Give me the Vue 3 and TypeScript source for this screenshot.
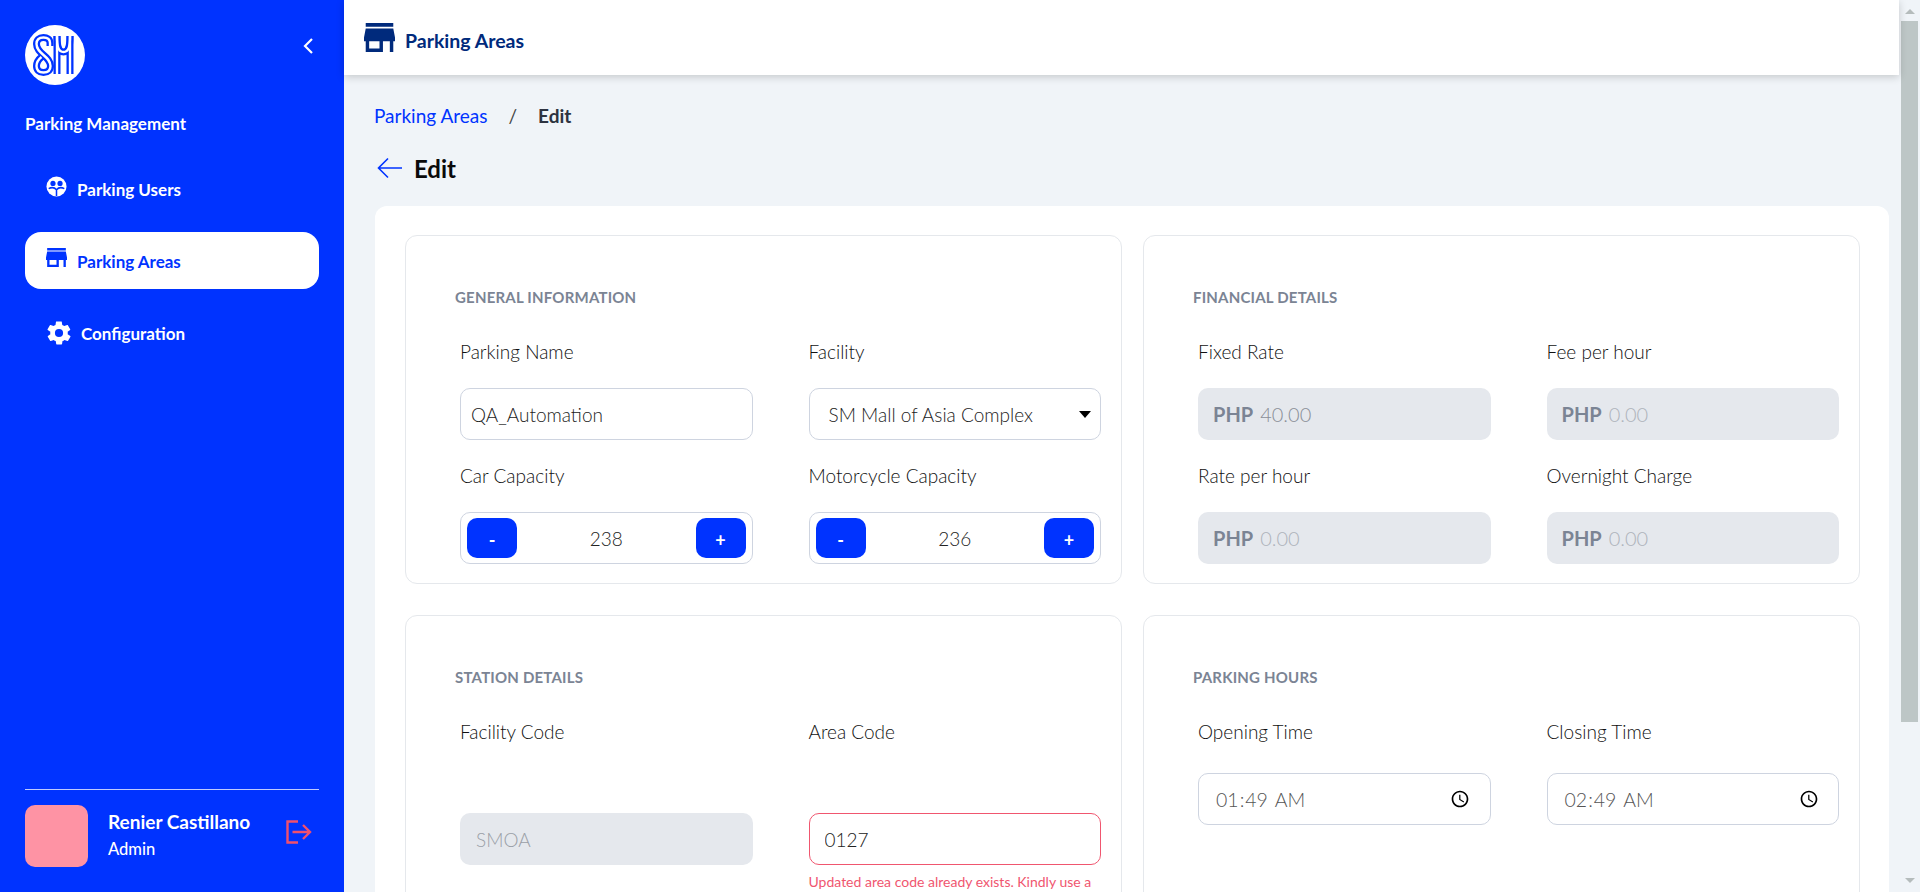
<script setup lang="ts">
interface NavItem {
  label: string
  icon: 'users' | 'store' | 'gear'
  active?: boolean
}

const navItems: NavItem[] = [
  { label: 'Parking Users', icon: 'users' },
  { label: 'Parking Areas', icon: 'store', active: true },
  { label: 'Configuration', icon: 'gear' }
]

const financialFields = [
  { label: 'Fixed Rate', value: '40.00', filled: true },
  { label: 'Fee per hour', value: '0.00' },
  { label: 'Rate per hour', value: '0.00' },
  { label: 'Overnight Charge', value: '0.00' }
]

/** Material "store" icon */
const storePath =
  'M20 4H4v2h16V4zm1 10v-2l-1-5H4l-1 5v2h1v6h10v-6h4v6h2v-6h1zm-9 4H6v-4h6v4z'

/** 标志的线条，先画蓝色粗线，再画白色细线形成双线效果 */
const logoStrokes = [
  'M25 21V18C25 14 22 12.500 18.500 12.500C14 12.500 11.500 15 11.500 19C11.500 24 15 27 18.500 30C22 33 25.500 36 25.500 41C25.500 45 23 47.500 18.500 47.500C14 47.500 11.500 45 11.500 41C11.500 37 14 34 16.500 32',
  'M32 11V49',
  'M45 11V49',
  'M32 11C32 22 33.500 27 38.500 27C43.500 27 45 22 45 11'
]
</script>

<template>
  <div class="layout">
    <aside class="sidebar">
      <div class="brand">
        <svg class="logo" viewBox="0 0 60 60">
          <circle cx="30" cy="30" r="30" fill="#fff" />
          <g fill="none">
            <path v-for="d in logoStrokes" :key="d" :d="d" stroke="#0033ff" stroke-width="7" />
            <path v-for="d in logoStrokes" :key="d + 'w'" :d="d" stroke="#fff" stroke-width="2.400" />
          </g>
        </svg>
        <svg class="collapse" viewBox="0 0 12 18">
          <path d="M10 2 3 9l7 7" fill="none" stroke="#fff" stroke-width="2.200" />
        </svg>
      </div>

      <div class="module-title">Parking Management</div>

      <nav class="nav">
        <a v-for="item in navItems" :key="item.label" class="nav-item" :class="{ active: item.active }">
          <svg v-if="item.icon === 'users'" class="nav-icon icon-users" viewBox="0 0 22 22">
            <circle cx="11" cy="11" r="10.500" fill="currentColor" />
            <circle cx="7.300" cy="7.800" r="2.700" fill="#0033ff" />
            <circle cx="14.700" cy="7.800" r="2.700" fill="#0033ff" />
            <path d="M2.800 13.300c2.800-1.500 6.200-1.200 8.200 1.200 2-2.400 5.400-2.700 8.200-1.200M11 14.500V21" fill="none" stroke="#0033ff" stroke-width="1.600" />
          </svg>
          <svg v-else-if="item.icon === 'store'" class="nav-icon icon-store" viewBox="3 4 18 16" preserveAspectRatio="none">
            <path fill="currentColor" :d="storePath" />
          </svg>
          <svg v-else class="nav-icon icon-gear" viewBox="0 0 24 24">
            <path fill="currentColor" d="M19.400 13c.1-.3.100-.7.100-1s0-.7-.1-1l2.100-1.600c.2-.2.200-.4.100-.6l-2-3.500c-.1-.2-.4-.3-.6-.2l-2.500 1c-.5-.4-1.100-.7-1.700-1l-.4-2.600c0-.3-.2-.4-.5-.4h-4c-.3 0-.5.100-.5.400l-.4 2.600c-.6.300-1.200.6-1.700 1l-2.500-1c-.2-.1-.5 0-.6.200l-2 3.500c-.1.200-.1.400.1.600L4.600 11c-.1.300-.1.700-.1 1s0 .7.100 1l-2.100 1.600c-.2.200-.2.400-.1.600l2 3.500c.1.200.4.300.6.200l2.500-1c.5.400 1.100.7 1.700 1l.4 2.600c0 .3.200.4.500.4h4c.3 0 .5-.1.500-.4l.4-2.600c.6-.3 1.200-.6 1.700-1l2.500 1c.2.100.5 0 .6-.2l2-3.500c.1-.2.100-.4-.1-.6ZM12 15.500a3.500 3.500 0 1 1 0-7 3.500 3.500 0 0 1 0 7Z" />
          </svg>
          <span class="nav-label">{{ item.label }}</span>
        </a>
      </nav>

      <div class="profile">
        <div class="avatar"></div>
        <div class="profile-text">
          <div class="profile-name">Renier Castillano</div>
          <div class="profile-role">Admin</div>
        </div>
        <svg class="logout" viewBox="0 0 26 24">
          <path d="M12 1.500H1.500v21H12M6.500 12H24M17 5l7 7-7 7" fill="none" stroke="#f0506e" stroke-width="2.400" />
        </svg>
      </div>
    </aside>

    <div class="main">
      <header class="topbar">
        <svg class="top-icon" viewBox="3 4 18 16" preserveAspectRatio="none">
          <path fill="currentColor" :d="storePath" />
        </svg>
        <span>Parking Areas</span>
      </header>

      <div class="content">
        <div class="breadcrumb">
          <a class="crumb-link">Parking Areas</a>
          <span class="crumb-sep">/</span>
          <span class="crumb-current">Edit</span>
        </div>

        <div class="page-title">
          <svg class="back" viewBox="0 0 26 22">
            <path d="M25 11H2M11 1.500 1.500 11l9.500 9.500" fill="none" stroke="#0033ff" stroke-width="1.600" />
          </svg>
          <h1>Edit</h1>
        </div>

        <div class="panel">
          <section class="card">
            <h2>General Information</h2>
            <div class="fields">
              <div class="field">
                <label>Parking Name</label>
                <input class="control" type="text" value="QA_Automation" />
              </div>
              <div class="field">
                <label>Facility</label>
                <div class="select-wrap">
                  <select class="control select">
                    <option>SM Mall of Asia Complex</option>
                  </select>
                  <span class="select-arrow"></span>
                </div>
              </div>
              <div class="field">
                <label>Car Capacity</label>
                <div class="control stepper">
                  <button type="button">-</button>
                  <span>238</span>
                  <button type="button">+</button>
                </div>
              </div>
              <div class="field">
                <label>Motorcycle Capacity</label>
                <div class="control stepper">
                  <button type="button">-</button>
                  <span>236</span>
                  <button type="button">+</button>
                </div>
              </div>
            </div>
          </section>

          <section class="card">
            <h2>Financial Details</h2>
            <div class="fields">
              <div v-for="field in financialFields" :key="field.label" class="field">
                <label>{{ field.label }}</label>
                <div class="control money">
                  <b>PHP</b>
                  <span :class="{ filled: field.filled }">{{ field.value }}</span>
                </div>
              </div>
            </div>
          </section>

          <section class="card">
            <h2>Station Details</h2>
            <div class="fields tall">
              <div class="field">
                <label>Facility Code</label>
                <input class="control disabled" type="text" value="SMOA" disabled />
              </div>
              <div class="field">
                <label>Area Code</label>
                <input class="control invalid" type="text" value="0127" />
                <p class="error">Updated area code already exists. Kindly use a</p>
              </div>
            </div>
          </section>

          <section class="card">
            <h2>Parking Hours</h2>
            <div class="fields hours">
              <div class="field">
                <label>Opening Time</label>
                <input class="control time" type="time" value="01:49" />
              </div>
              <div class="field">
                <label>Closing Time</label>
                <input class="control time" type="time" value="02:49" />
              </div>
            </div>
          </section>
        </div>
      </div>
    </div>

    <div class="scrollbar">
      <span class="arrow up"></span>
      <span class="thumb"></span>
      <span class="arrow down"></span>
    </div>
  </div>
</template>

<style>
html,
body {
  margin: 0;
  overflow: hidden;
}
</style>

<style scoped>
.layout {
  display: flex;
  height: 892px;
  overflow: hidden;
  font-family: Lato, 'Noto Sans', sans-serif;
  color: #111;
  background: #f0f4f8;
}

/* 侧边栏 */
.sidebar {
  width: 344px;
  flex: none;
  box-sizing: border-box;
  padding: 25px 25px 0;
  display: flex;
  flex-direction: column;
  background: #0033ff;
  color: #fff;
}

.brand {
  display: flex;
  justify-content: space-between;
  height: 60px;
}

.logo {
  width: 60px;
  height: 60px;
}

.collapse {
  width: 12px;
  height: 18px;
  margin: 12px 5px 0 0;
}

.module-title {
  margin-top: 29px;
  font-size: 17px;
  line-height: 20px;
  font-weight: 700;
}

.nav {
  margin-top: 26px;
  display: flex;
  flex-direction: column;
  gap: 15px;
}

.nav-item {
  height: 57px;
  padding-left: 21px;
  display: flex;
  align-items: center;
  gap: 9px;
  border-radius: 16px;
  font-size: 17px;
  font-weight: 700;
}

.nav-item.active {
  background: #fff;
  color: #0033ff;
}

.nav-label {
  margin-top: 2px;
}

.nav-icon {
  flex: none;
}

.icon-users {
  width: 21px;
  height: 21px;
  margin-top: -5px;
  margin-right: 1px;
}

.icon-store {
  width: 21px;
  height: 19px;
  margin-top: -6px;
  margin-right: 1px;
}

.icon-gear {
  width: 28px;
  height: 28px;
  margin-left: -1px;
  margin-right: -1px;
}

.profile {
  margin-top: auto;
  height: 103px;
  box-sizing: border-box;
  padding-top: 15px;
  display: flex;
  border-top: 1px solid rgba(255, 255, 255, 0.75);
}

.avatar {
  width: 63px;
  height: 62px;
  border-radius: 10px;
  background: #fe93a4;
}

.profile-text {
  margin-left: 20px;
  padding-top: 6px;
}

.profile-name {
  font-size: 19px;
  line-height: 22px;
  font-weight: 700;
}

.profile-role {
  margin-top: 6px;
  font-size: 16.500px;
  line-height: 20px;
  font-weight: 500;
}

.logout {
  width: 26px;
  height: 24px;
  margin: 15px 7px 0 auto;
}

/* 主区域 */
.main {
  flex: 1;
  min-width: 0;
  display: flex;
  flex-direction: column;
}

.topbar {
  position: relative;
  z-index: 1;
  height: 75px;
  flex: none;
  box-sizing: border-box;
  padding-left: 20px;
  display: flex;
  align-items: center;
  gap: 10px;
  background: #fff;
  box-shadow: 0 2px 8px rgba(0, 0, 0, 0.18);
  color: #002a7c;
  font-size: 19.500px;
  font-weight: 700;
}

.topbar span {
  margin-top: 6px;
}

.top-icon {
  width: 31px;
  height: 29px;
}

.content {
  flex: 1;
  min-height: 0;
  padding: 28px 10px 0 31px;
  overflow: hidden;
}

.breadcrumb {
  margin-left: -1px;
  display: flex;
  align-items: center;
  height: 24px;
  font-size: 19px;
}

.crumb-link {
  color: #0033ff;
}

.crumb-sep {
  margin: 0 21px;
  color: #444;
}

.crumb-current {
  color: #2d3340;
  font-weight: 700;
}

.page-title {
  margin-top: 27px;
  display: flex;
  align-items: center;
  gap: 11px;
  height: 28px;
}

.back {
  width: 26px;
  height: 22px;
  margin-left: 2px;
}

.page-title h1 {
  margin: 0;
  font-size: 24px;
  font-weight: 700;
  color: #0a0a0a;
}

.panel {
  margin-top: 24px;
  padding: 29px 29px 30px 30px;
  display: grid;
  grid-template-columns: 1fr 1fr;
  gap: 31px 21px;
  background: #fff;
  border-radius: 12px;
}

.card {
  box-sizing: border-box;
  height: 349px;
  padding-top: 51px;
  border: 1px solid #e5e8ec;
  border-radius: 12px;
}

.card h2 {
  margin: 0 0 33px 49px;
  font-size: 15px;
  line-height: 20px;
  font-weight: 700;
  text-transform: uppercase;
  letter-spacing: 0.2px;
  color: #7b8494;
}

.fields {
  padding: 0 20px 0 54px;
  display: grid;
  grid-template-columns: 1fr 1fr;
  gap: 24px 56px;
}

.field {
  min-width: 0;
}

.field label {
  display: block;
  margin-bottom: 24px;
  font-size: 19px;
  line-height: 24px;
  font-weight: 300;
  color: #111;
}

.fields.tall label {
  margin-bottom: 69px;
}

.fields.hours label {
  margin-bottom: 29px;
}

.control {
  display: block;
  width: 100%;
  height: 52px;
  box-sizing: border-box;
  padding: 0 10px;
  border: 1px solid #ced4e0;
  border-radius: 10px;
  background: #fff;
  font: 300 19px Lato, 'Noto Sans', sans-serif;
  color: #222;
  outline: none;
}

.select-wrap {
  position: relative;
}

.select {
  padding-left: 19px;
  appearance: none;
}

.select-arrow {
  position: absolute;
  right: 10px;
  top: 23px;
  border: 6px solid transparent;
  border-top: 7px solid #000;
  border-bottom: 0;
}

.stepper {
  padding: 0 6px;
  display: flex;
  align-items: center;
  justify-content: space-between;
}

.stepper button {
  width: 50px;
  height: 40px;
  padding: 3px 0 0;
  border: 0;
  border-radius: 10px;
  background: #0033ff;
  color: #fff;
  font: 700 18px Lato, sans-serif;
}

.money {
  padding: 0 15px;
  display: flex;
  align-items: center;
  gap: 7px;
  border: 0;
  background: #e5e8ed;
  font-size: 20px;
  color: #aeb3bb;
}

.money b {
  color: #7b8494;
  font-weight: 700;
}

.money .filled {
  color: #8a8f98;
}

.disabled {
  padding: 0 16px;
  border: 0;
  background: #e5e8ed;
  color: #9a9fa7;
}

.invalid {
  padding: 0 15px;
  border-color: #f0566f;
}

.error {
  margin: 9px 0 0;
  font-size: 14px;
  line-height: 16px;
  color: #f0566f;
  white-space: nowrap;
}

.time {
  padding: 0 16px;
  font-size: 19.500px;
  color: #555;
}

/* 滚动条 */
.scrollbar {
  width: 21px;
  flex: none;
  box-sizing: border-box;
  padding: 0 2px;
  display: flex;
  flex-direction: column;
  align-items: center;
}

.thumb {
  width: 100%;
  height: 701px;
  background: #bdc6c6;
}

.arrow {
  border: 5px solid transparent;
}

.arrow.up {
  margin: 9px 0 7px;
  border-bottom: 5px solid #b5bcbc;
  border-top: 0;
}

.arrow.down {
  margin-top: auto;
  margin-bottom: 9px;
  border-top: 5px solid #b5bcbc;
  border-bottom: 0;
}
</style>
